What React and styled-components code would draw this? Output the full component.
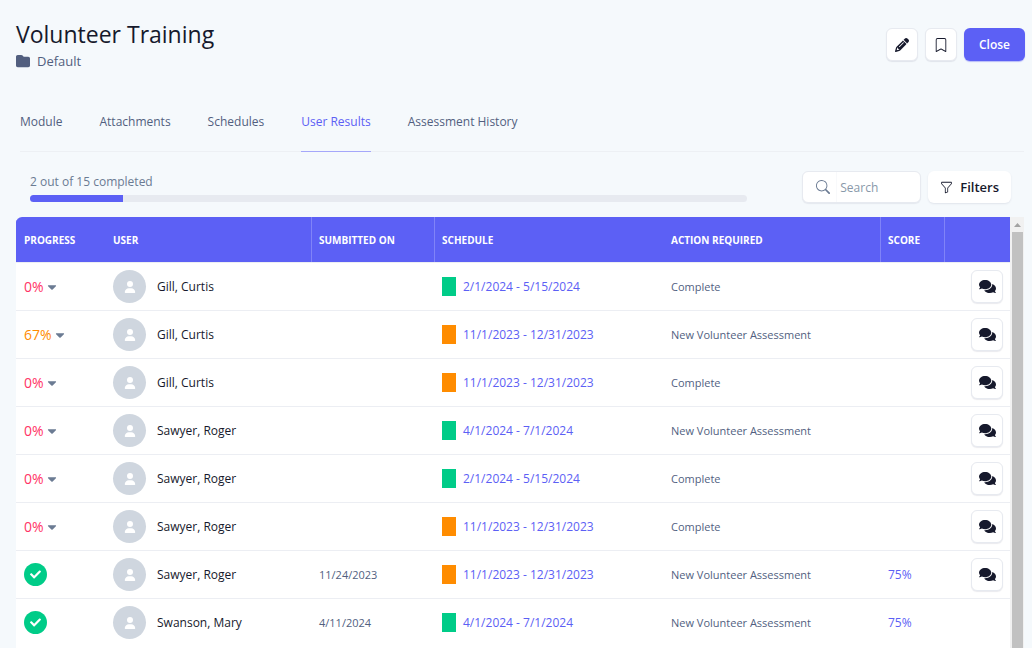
import React from "react";
import styled, { createGlobalStyle } from "styled-components";
import { FaCaretDown, FaCheck, FaComments } from "react-icons/fa";
import { FaFolder, FaPencil, FaUser } from "react-icons/fa6";
import { BsBookmark, BsFunnel, BsSearch } from "react-icons/bs";

const tabs = ["Module", "Attachments", "Schedules", "User Results", "Assessment History"];

const columns = [
  { label: "Progress", width: 89 },
  { label: "User", width: 206 },
  { label: "Sumbitted On", width: 123, divider: true },
  { label: "Schedule", width: 229, divider: true },
  { label: "Action Required", width: 217 },
  { label: "Score", width: 64, divider: true },
  { label: "", width: 66, divider: true },
];

const rows = [
  { progress: 0, user: "Gill, Curtis", schedule: "2/1/2024 - 5/15/2024", open: true, action: "Complete", comments: true },
  { progress: 67, user: "Gill, Curtis", schedule: "11/1/2023 - 12/31/2023", action: "New Volunteer Assessment", comments: true },
  { progress: 0, user: "Gill, Curtis", schedule: "11/1/2023 - 12/31/2023", action: "Complete", comments: true },
  { progress: 0, user: "Sawyer, Roger", schedule: "4/1/2024 - 7/1/2024", open: true, action: "New Volunteer Assessment", comments: true },
  { progress: 0, user: "Sawyer, Roger", schedule: "2/1/2024 - 5/15/2024", open: true, action: "Complete", comments: true },
  { progress: 0, user: "Sawyer, Roger", schedule: "11/1/2023 - 12/31/2023", action: "Complete", comments: true },
  { progress: 100, user: "Sawyer, Roger", submitted: "11/24/2023", schedule: "11/1/2023 - 12/31/2023", action: "New Volunteer Assessment", score: "75%", comments: true },
  { progress: 100, user: "Swanson, Mary", submitted: "4/11/2024", schedule: "4/1/2024 - 7/1/2024", open: true, action: "New Volunteer Assessment", score: "75%" },
];

const completed = 13;

function Progress({ value }) {
  if (value === 100) {
    return (
      <Done>
        <FaCheck />
      </Done>
    );
  }
  return (
    <ProgressButton type="button" $started={value > 0}>
      {value}%
      <FaCaretDown />
    </ProgressButton>
  );
}

function App() {
  return (
    <Root>
      <GlobalStyle />
      <Header>
        <div>
          <Title>Volunteer Training</Title>
          <Folder>
            <FaFolder />
            Default
          </Folder>
        </div>
        <Actions>
          <IconButton type="button" aria-label="Edit">
            <FaPencil />
          </IconButton>
          <IconButton type="button" aria-label="Bookmark">
            <BsBookmark />
          </IconButton>
          <CloseButton type="button">Close</CloseButton>
        </Actions>
      </Header>
      <Tabs>
        {tabs.map((tab) => (
          <Tab key={tab} href="#" $active={tab === "User Results"}>
            {tab}
          </Tab>
        ))}
      </Tabs>
      <Toolbar>
        <Completion>
          <CompletionText>2 out of 15 completed</CompletionText>
          <Track>
            <Fill style={{ width: `${completed}%` }} />
          </Track>
        </Completion>
        <SearchBox>
          <BsSearch />
          <SearchInput type="text" placeholder="Search" aria-label="Search" />
        </SearchBox>
        <FilterButton type="button">
          <BsFunnel />
          Filters
        </FilterButton>
      </Toolbar>
      <Results>
        <TableArea>
          <Table>
            <colgroup>
              {columns.map((column) => (
                <Col key={column.label} $width={column.width} />
              ))}
            </colgroup>
            <thead>
              <tr>
                {columns.map((column) => (
                  <HeadCell key={column.label} $divider={column.divider}>
                    {column.label}
                  </HeadCell>
                ))}
              </tr>
            </thead>
            <tbody>
              {rows.map((row, index) => (
                <tr key={index}>
                  <Cell>
                    <Progress value={row.progress} />
                  </Cell>
                  <Cell>
                    <User>
                      <Avatar>
                        <FaUser />
                      </Avatar>
                      {row.user}
                    </User>
                  </Cell>
                  <Cell>{row.submitted}</Cell>
                  <Cell>
                    <Schedule href="#">
                      <Swatch $open={row.open} />
                      {row.schedule}
                    </Schedule>
                  </Cell>
                  <Cell>{row.action}</Cell>
                  <Cell>{row.score && <Score href="#">{row.score}</Score>}</Cell>
                  <ButtonCell>
                    {row.comments && (
                      <IconButton type="button" aria-label="Comments">
                        <Comments />
                      </IconButton>
                    )}
                  </ButtonCell>
                </tr>
              ))}
            </tbody>
          </Table>
        </TableArea>
        <Scrollbar>
          <ScrollArrow viewBox="0 0 11 15">
            <path d="M2 10L5.500 6L9 10Z" fill="#a3a3a3" />
          </ScrollArrow>
          <Thumb />
        </Scrollbar>
      </Results>
    </Root>
  );
}

const GlobalStyle = createGlobalStyle`
  * {
    box-sizing: border-box;
  }
  body {
    margin: 0;
    background: #f5f9fc;
    font-family: "Open Sans", "Noto Sans", sans-serif;
  }
  button, input {
    font-family: inherit;
  }
`;

const Root = styled.div`
  display: flex;
  flex-direction: column;
  height: 100vh;
  overflow: hidden;
`;

const Header = styled.header`
  display: flex;
  justify-content: space-between;
  align-items: flex-start;
  padding: 16px 7px 0 16px;
`;

const Title = styled.h1`
  margin: 0;
  color: #16192c;
  font-size: 23px;
  font-weight: 500;
  line-height: 36px;
`;

const Folder = styled.div`
  display: flex;
  align-items: center;
  gap: 7px;
  color: #525f7f;
  font-size: 13px;
  line-height: 18px;

  svg {
    font-size: 14px;
  }
`;

const Actions = styled.div`
  display: flex;
  gap: 7px;
  padding-top: 12px;
`;

const IconButton = styled.button`
  display: inline-flex;
  align-items: center;
  justify-content: center;
  width: 32px;
  height: 33px;
  padding: 0;
  border: 1px solid #e7eaf0;
  border-radius: 6px;
  background: #fff;
  color: #16192c;
  font-size: 14px;
  box-shadow: 0 1px 1px rgba(50, 50, 93, 0.1);
`;

const CloseButton = styled.button`
  height: 33px;
  padding: 0 15px;
  border: none;
  border-radius: 6px;
  background: #5c60f5;
  color: #fff;
  font-size: 12px;
  font-weight: 600;
  box-shadow: 0 1px 1px rgba(92, 96, 245, 0.4);
`;

const Tabs = styled.nav`
  display: flex;
  gap: 37px;
  margin: 37px 8px 0 20px;
  border-bottom: 1px solid #edf0f4;
`;

const Tab = styled.a`
  height: 45px;
  margin-bottom: -1px;
  border-bottom: 1px solid ${(props) => (props.$active ? "#a5a7fa" : "transparent")};
  color: ${(props) => (props.$active ? "#5c60f5" : "#525f7f")};
  font-size: 12px;
  font-weight: 500;
  line-height: 30px;
  text-decoration: none;
`;

const Toolbar = styled.div`
  display: flex;
  padding: 19px 21px 14px 30px;
`;

const Completion = styled.div`
  flex: 1;
  margin-right: 55px;
`;

const CompletionText = styled.div`
  margin-bottom: 2px;
  color: #6b7b93;
  font-size: 12px;
  line-height: 22px;
`;

const Track = styled.div`
  height: 7px;
  border-radius: 4px;
  background: #e7eaf0;
  overflow: hidden;
`;

const Fill = styled.div`
  height: 100%;
  background: #5c60f5;
`;

const SearchBox = styled.label`
  display: flex;
  align-items: center;
  gap: 6px;
  width: 119px;
  height: 32px;
  padding: 0 13px;
  border: 1px solid #e7eaf0;
  border-radius: 6px;
  background: #fff;
  color: #6b7b93;
  font-size: 14px;
  box-shadow: 0 1px 1px rgba(50, 50, 93, 0.08);

  svg {
    flex: none;
  }
`;

const SearchInput = styled.input`
  flex: 1;
  min-width: 0;
  height: 100%;
  padding: 0 0 0 3px;
  border: none;
  border-left: 1px solid #f8f9fb;
  outline: none;
  background: none;
  color: #16192c;
  font-size: 12px;

  &::placeholder {
    color: #8898a9;
  }
`;

const FilterButton = styled.button`
  display: flex;
  align-items: center;
  gap: 7px;
  height: 32px;
  margin-left: 7px;
  padding: 0 12px;
  border: none;
  border-radius: 6px;
  background: #fff;
  color: #16192c;
  font-size: 13px;
  font-weight: 600;
  box-shadow: 0 1px 2px rgba(50, 50, 93, 0.1);
`;

const Results = styled.div`
  display: flex;
  flex: 1;
  min-height: 0;
  padding: 0 8px 0 16px;
`;

const TableArea = styled.div`
  flex: 1;
  overflow: hidden;
  border-top-left-radius: 6px;
  background: #fff;
`;

const Table = styled.table`
  width: 100%;
  table-layout: fixed;
  border-collapse: separate;
  border-spacing: 0;
`;

const Col = styled.col`
  width: ${(props) => props.$width}px;
`;

const HeadCell = styled.th`
  height: 45px;
  padding: 0 7px;
  border-left: 1px solid ${(props) => (props.$divider ? "#8083f8" : "#5c60f5")};
  background: #5c60f5;
  color: #fff;
  font-size: 10px;
  font-weight: 700;
  text-align: left;
  text-transform: uppercase;
`;

const Cell = styled.td`
  height: 48px;
  padding: 0 7px 0 8px;
  border-top: 1px solid #eceef3;
  color: #525f7f;
  font-size: 11px;
  line-height: 20px;
  white-space: nowrap;
`;

const ButtonCell = styled(Cell)`
  text-align: right;

  button {
    vertical-align: middle;
  }
`;

const ProgressButton = styled.button`
  display: flex;
  align-items: center;
  gap: 1px;
  padding: 0;
  border: none;
  background: none;
  color: ${(props) => (props.$started ? "#ff8c00" : "#ff3366")};
  font-size: 14px;
  line-height: 20px;

  svg {
    color: #6b7b93;
  }
`;

const Done = styled.span`
  display: flex;
  align-items: center;
  justify-content: center;
  width: 23px;
  height: 23px;
  border-radius: 50%;
  background: #00cc88;
  color: #fff;
  font-size: 11px;
`;

const User = styled.div`
  display: flex;
  align-items: center;
  gap: 11px;
  color: #16192c;
  font-size: 12px;
  font-weight: 500;
`;

const Avatar = styled.span`
  display: flex;
  align-items: center;
  justify-content: center;
  width: 33px;
  height: 33px;
  border-radius: 50%;
  background: #cfd6df;
  color: #fff;
  font-size: 12px;
`;

const Schedule = styled.a`
  display: flex;
  align-items: center;
  gap: 7px;
  color: #5c60f5;
  font-size: 12px;
  font-weight: 500;
  text-decoration: none;
`;

const Swatch = styled.span`
  width: 14px;
  height: 19px;
  background: ${(props) => (props.$open ? "#00cc88" : "#ff8c00")};
`;

const Score = styled.a`
  color: #5c60f5;
  font-size: 12px;
  font-weight: 500;
  text-decoration: none;
`;

const Comments = styled(FaComments)`
  font-size: 17px;
`;

const Scrollbar = styled.div`
  display: flex;
  flex-direction: column;
  width: 14px;
  padding: 0 1px 0 2px;
  background: #f1f1f1;
`;

const ScrollArrow = styled.svg`
  display: block;
  flex: none;
  height: 15px;
`;

const Thumb = styled.div`
  flex: 1;
  background: #c1c1c1;
`;

export default App;
